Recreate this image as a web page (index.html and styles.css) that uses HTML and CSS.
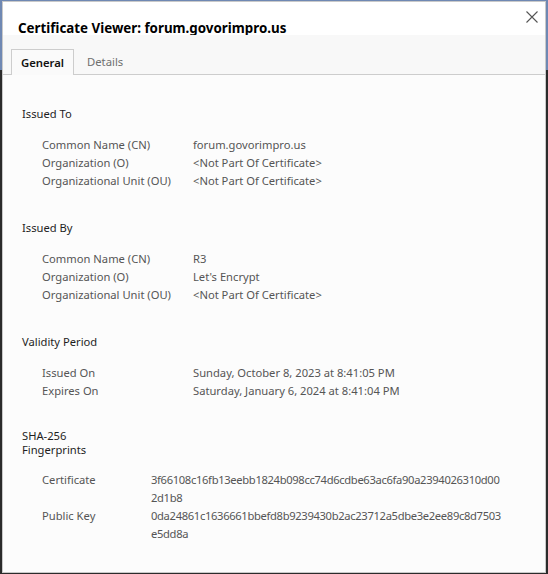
FILE: index.html
```html
<!DOCTYPE html>
<html>
<head>
<meta charset="utf-8">
<link rel="stylesheet" href="styles.css">
</head>
<body>
<div class="dialog">
  <div class="header">
    <div class="title">Certificate Viewer: forum.govorimpro.us</div>
    <svg class="close" width="12" height="12" viewBox="0 0 12 12"><path d="M0.5 0.5L11.5 11.5M11.5 0.5L0.5 11.5" stroke="#555" stroke-width="1.1" fill="none"/></svg>
  </div>
  <div class="tabbar">
    <div class="tab active">General</div>
    <div class="tab">Details</div>
  </div>
  <div class="content">
    <div class="section">
      <div class="heading">Issued To</div>
      <div class="rows">
        <div class="label">Common Name (CN)</div><div class="value">forum.govorimpro.us</div>
        <div class="label">Organization (O)</div><div class="value">&lt;Not Part Of Certificate&gt;</div>
        <div class="label">Organizational Unit (OU)</div><div class="value">&lt;Not Part Of Certificate&gt;</div>
      </div>
    </div>
    <div class="section">
      <div class="heading">Issued By</div>
      <div class="rows">
        <div class="label">Common Name (CN)</div><div class="value">R3</div>
        <div class="label">Organization (O)</div><div class="value">Let's Encrypt</div>
        <div class="label">Organizational Unit (OU)</div><div class="value">&lt;Not Part Of Certificate&gt;</div>
      </div>
    </div>
    <div class="section">
      <div class="heading">Validity Period</div>
      <div class="rows">
        <div class="label">Issued On</div><div class="value">Sunday, October 8, 2023 at 8:41:05 PM</div>
        <div class="label">Expires On</div><div class="value">Saturday, January 6, 2024 at 8:41:04 PM</div>
      </div>
    </div>
    <div class="section fp">
      <div class="heading">SHA-256<br>Fingerprints</div>
      <div class="rows">
        <div class="label">Certificate</div><div class="value hash"><span>3f66108c16fb13eebb1824b098cc74d6cdbe63ac6fa90a2394026310d00</span><span>2d1b8</span></div>
        <div class="label">Public Key</div><div class="value hash"><span>0da24861c1636661bbefd8b9239430b2ac23712a5dbe3e2ee89c8d7503</span><span>e5dd8a</span></div>
      </div>
    </div>
  </div>
</div>
</body>
</html>
```
FILE: styles.css
```css
html, body {
  margin: 0;
  padding: 0;
}
body {
  width: 548px;
  height: 574px;
  overflow: hidden;
  background: linear-gradient(to bottom, #6f88b3 0, #6f88b3 70px, #2b2b2b 70px, #2b2b2b 100%);
  font-family: "Noto Sans", "Open Sans", sans-serif;
}
.dialog {
  box-sizing: border-box;
  width: 544px;
  height: 572px;
  margin: 1px 2px;
  border: 1px solid #c9c9c9;
  background: #fcfcfc;
  display: flex;
  flex-direction: column;
}
.header {
  box-sizing: border-box;
  height: 33px;
  background: #ffffff;
  padding: 17px 0 0 15px;
  display: flex;
  align-items: flex-start;
  justify-content: space-between;
}
.title {
  font-size: 13.35px;
  font-weight: 700;
  line-height: 18px;
  color: #000;
}
.close {
  margin: -8px 7px 0 0;
}
.tabbar {
  box-sizing: border-box;
  height: 40px;
  background: #f8f8f8;
  border-bottom: 1px solid #cdcdcd;
  padding: 14px 0 0 8px;
  display: flex;
  align-items: flex-end;
  gap: 13px;
}
.tab {
  font-size: 11.3px;
  line-height: 25px;
  color: #6f6f6f;
}
.tab.active {
  box-sizing: border-box;
  height: 26px;
  width: 63px;
  margin-bottom: -1px;
  border: 1px solid #cdcdcd;
  border-bottom: none;
  background: #fafafa;
  color: #111;
  font-weight: 600;
  text-align: center;
}
.content {
  flex: 1;
  padding: 30px 0 0 19px;
  font-size: 11.2px;
  color: #555;
}
.section {
  margin-bottom: 29px;
}
.heading {
  color: #1e1e1e;
  line-height: 18px;
  margin-bottom: 13px;
}
.rows {
  display: grid;
  grid-template-columns: 151px auto;
  padding-left: 20px;
  line-height: 18px;
}
.fp {
  margin-top: 3px;
}
.fp .heading {
  line-height: 14px;
  margin-bottom: 14px;
}
.fp .rows {
  grid-template-columns: 109px auto;
}
.hash {
  letter-spacing: -0.33px;
}
.hash span {
  display: block;
}
```
